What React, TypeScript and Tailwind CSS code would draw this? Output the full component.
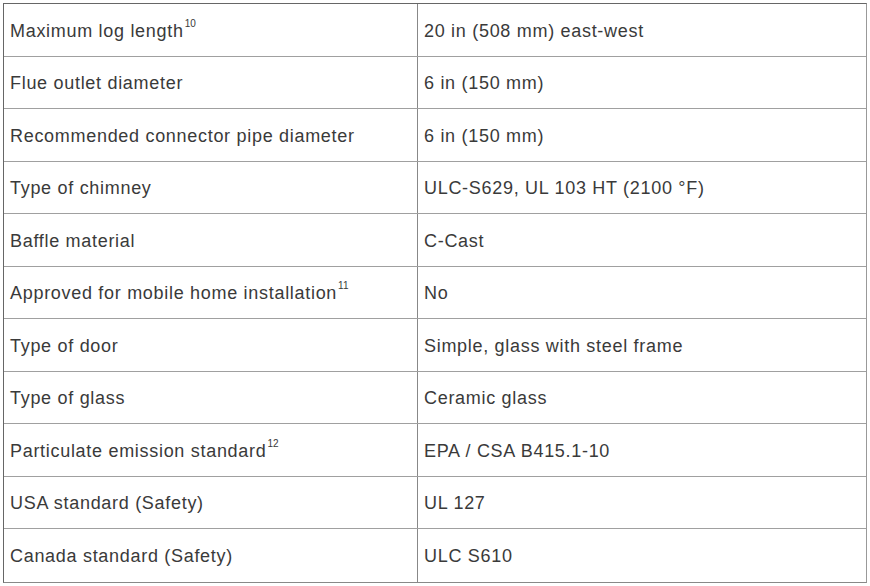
import React from "react";

const sup = (n: string) => (
  <sup className="text-[10px] align-[5px] leading-none ml-px tracking-normal">{n}</sup>
);

const rows: [React.ReactNode, string][] = [
  [<>Maximum log length{sup("10")}</>, "20 in (508 mm) east-west"],
  ["Flue outlet diameter", "6 in (150 mm)"],
  ["Recommended connector pipe diameter", "6 in (150 mm)"],
  ["Type of chimney", "ULC-S629, UL 103 HT (2100 °F)"],
  ["Baffle material", "C-Cast"],
  [<>Approved for mobile home installation{sup("11")}</>, "No"],
  ["Type of door", "Simple, glass with steel frame"],
  ["Type of glass", "Ceramic glass"],
  [<>Particulate emission standard{sup("12")}</>, "EPA / CSA B415.1-10"],
  ["USA standard (Safety)", "UL 127"],
  ["Canada standard (Safety)", "ULC S610"],
];

export default function App() {
  return (
    <div className="w-[870px] h-[586px] bg-white pt-[3px] pl-[3px]" style={{ fontFamily: '"Liberation Sans", Arial, sans-serif' }}>
      <div className="w-[864px] border border-[#666] border-r-[#999] border-b-[#888]">
        {rows.map(([label, value], i) => (
          <div
            key={i}
            className={`grid grid-cols-[414px_1fr] h-[52.5px] ${i < rows.length - 1 ? "border-b border-[#a0a0a0]" : ""}`}
          >
            <div className="flex items-center pl-[6px] pt-[3px] text-[18px] text-[#3a3a3a] border-r border-[#888] tracking-[0.7px]">
              <span>{label}</span>
            </div>
            <div className="flex items-center pl-[6px] pt-[3px] text-[18px] text-[#3a3a3a] tracking-[0.7px]">
              {value}
            </div>
          </div>
        ))}
      </div>
    </div>
  );
}
